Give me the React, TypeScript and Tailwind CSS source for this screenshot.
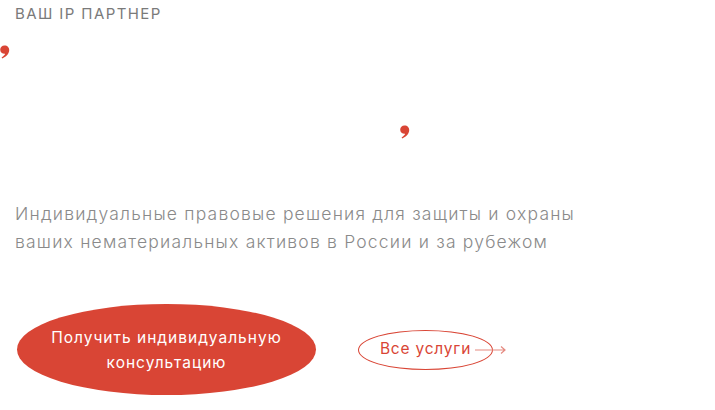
import React from "react";

function Comma({ className }: { className?: string }) {
  return (
    <svg viewBox="0 0 12 14" className={className} fill="#d94535">
      <path d="M6.5 0.5C9.5 0.5 11.5 2.6 11.2 5.6C10.9 9.2 8 12.1 4.2 13.5L3.6 12.4C5.6 11.3 6.8 10 7.1 8.8C4.6 9 2.2 7.6 2.2 4.8C2.2 2.3 4 0.5 6.5 0.5Z" />
    </svg>
  );
}

export default function App() {
  return (
    <div className="w-[715px] h-[410px] bg-white overflow-hidden" style={{ fontFamily: "Inter, 'Open Sans', sans-serif" }}>
      <div className="pl-[15px] pt-[5px]">
        <div className="text-[15px] leading-[18px] uppercase text-[#7a7a7a] tracking-[1.4px]">Ваш IP партнер</div>
      </div>

      <div className="relative h-[177px]">
        <Comma className="absolute left-[-2px] top-[22px] w-[12px] h-[14px]" />
        <Comma className="absolute left-[398px] top-[102px] w-[12px] h-[14px]" />
      </div>

      <p className="pl-[15px] text-[17.5px] leading-[28px] text-[#8a8a8a] tracking-[1.2px] font-light">
        Индивидуальные правовые решения для защиты и охраны
        <br />
        ваших нематериальных активов в России и за рубежом
      </p>

      <div className="flex items-center mt-[48px] pl-[17px]">
        <button className="w-[299px] h-[91px] rounded-[50%] bg-[#d94535] text-white text-[15.5px] leading-[25px] text-center tracking-[1px]">
          Получить индивидуальную
          <br />
          консультацию
        </button>
        <div className="relative ml-[42px] flex items-center">
          <button className="w-[135px] h-[40px] rounded-[50%] border border-[#d94535] text-[#d94535] text-[15.5px] tracking-[0.8px] pb-[2px]">
            Все услуги
          </button>
          <svg className="absolute left-[117px] top-[15px]" width="32" height="10" viewBox="0 0 32 10" fill="none" stroke="#e58a80" strokeWidth="1.2">
            <path d="M0 5H30M26 1.5L30 5L26 8.5" />
          </svg>
        </div>
      </div>
    </div>
  );
}
